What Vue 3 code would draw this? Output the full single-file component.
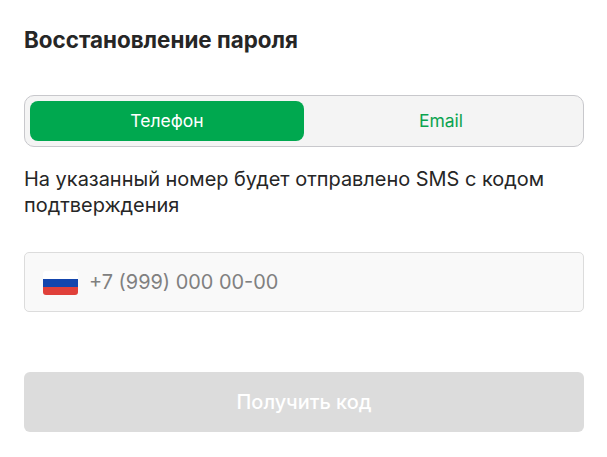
<script setup>
const title = 'Восстановление пароля'
</script>

<template>
  <div class="page">
    <h1 class="title">{{ title }}</h1>
    <div class="tabs">
      <button class="tab active">Телефон</button>
      <button class="tab">Email</button>
    </div>
    <p class="hint">На указанный номер будет отправлено SMS с кодом подтверждения</p>
    <div class="field">
      <svg class="flag" width="35" height="24" viewBox="0 0 35 24">
        <defs><clipPath id="fc"><rect width="35" height="24" rx="3" /></clipPath></defs>
        <g clip-path="url(#fc)">
          <rect width="35" height="8" fill="#ffffff" />
          <rect y="8" width="35" height="8" fill="#1446ad" />
          <rect y="16" width="35" height="8" fill="#e0403a" />
        </g>
      </svg>
      <span class="placeholder">+7 (999) 000 00-00</span>
    </div>
    <button class="submit">Получить код</button>
  </div>
</template>

<style scoped>
.page {
  box-sizing: border-box;
  width: 607px;
  height: 457px;
  padding: 27px 23px 0 24px;
  background: #ffffff;
  font-family: Inter, "Liberation Sans", sans-serif;
  color: #262626;
  display: flex;
  flex-direction: column;
  overflow: hidden;
}
.title {
  margin: 0;
  font-size: 22.4px;
  line-height: 26px;
  font-weight: 700;
}
.tabs {
  box-sizing: border-box;
  margin-top: 42px;
  height: 52px;
  padding: 5px;
  display: flex;
  background: #f4f4f4;
  border: 1px solid #c8c8cc;
  border-radius: 10px;
}
.tab {
  flex: 1;
  border: 0;
  background: transparent;
  color: #0aa34f;
  font-family: inherit;
  font-size: 17.5px;
  border-radius: 8px;
  padding: 0 0 2px;
}
.tab.active {
  background: #00a84f;
  color: #ffffff;
}
.hint {
  margin: 19px 0 0;
  font-size: 19.95px;
  line-height: 26px;
}
.field {
  box-sizing: border-box;
  margin-top: 34px;
  height: 60px;
  display: flex;
  align-items: center;
  gap: 11px;
  padding: 2px 18px 0;
  background: #f9f9f9;
  border: 1px solid #dcdcdc;
  border-radius: 5px;
}
.flag {
  flex: none;
}
.placeholder {
  font-size: 19.9px;
  color: #808080;
  margin-bottom: 2px;
}
.submit {
  margin-top: 60px;
  height: 60px;
  border: 0;
  border-radius: 6px;
  background: #dcdcdc;
  color: #ffffff;
  font-family: inherit;
  font-size: 19.9px;
  font-weight: 500;
  padding: 0;
}
</style>
